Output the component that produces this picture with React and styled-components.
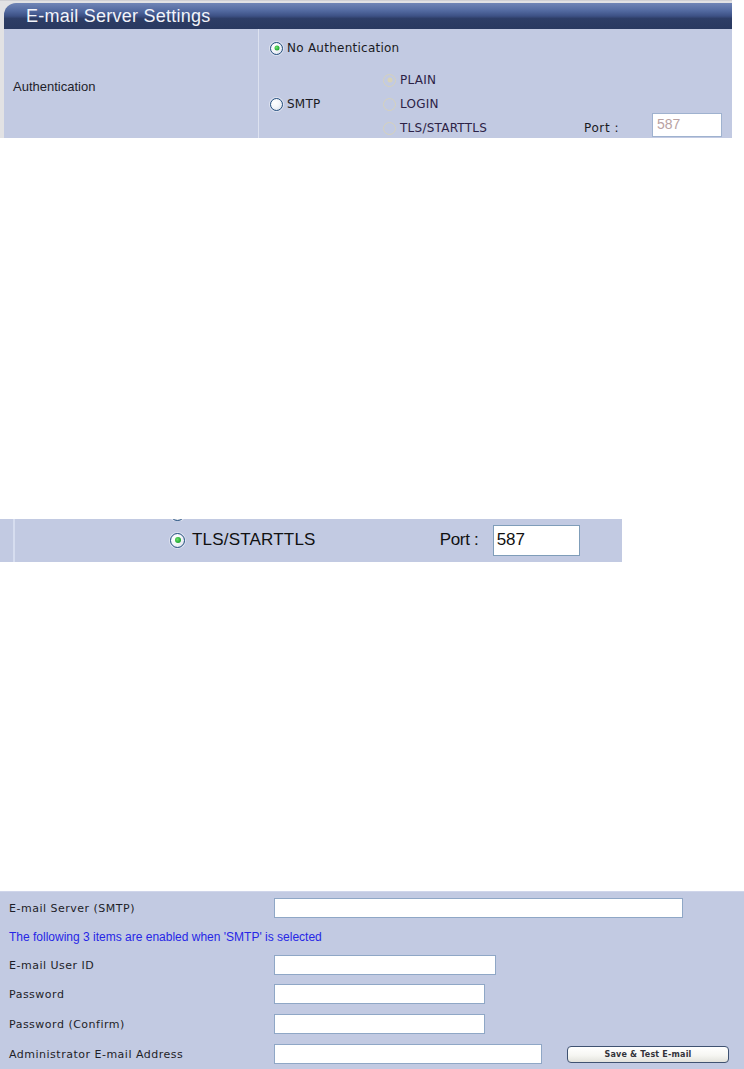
import React from "react";
import styled, { createGlobalStyle } from "styled-components";

const GlobalStyle = createGlobalStyle`
  html, body {
    margin: 0;
    padding: 0;
    background: #ffffff;
  }
  * {
    box-sizing: border-box;
  }
`;

const PANEL_BG = "#c2cae2";

const Page = styled.div`
  display: flex;
  flex-direction: column;
  width: 744px;
  height: 1069px;
  overflow: hidden;
`;

/* ---------- top panel ---------- */

const Frame = styled.div`
  width: 732px;
  height: 138px;
  padding: 2px 0 0 4px;
  background: #e2e2e4;
  border-top: 1px solid #d0d0d4;
`;

const HeaderBar = styled.div`
  height: 26px;
  display: flex;
  align-items: center;
  padding-left: 22px;
  border-top-left-radius: 12px;
  background: linear-gradient(
    #7085b6 0%,
    #5269a0 30%,
    #3d5185 50%,
    #2d3d66 60%,
    #293960 100%
  );
  color: #f2f4fa;
  font-family: "Liberation Sans", Arial, sans-serif;
  font-size: 18px;
  letter-spacing: 0.25px;
`;

const PanelBody = styled.div`
  height: 109px;
  display: grid;
  grid-template-columns: 254px 1px 1fr;
  background: ${PANEL_BG};
  overflow: hidden;
`;

const LabelCell = styled.div`
  display: flex;
  align-items: center;
  padding: 3px 0 0 9px;
  font-family: "Liberation Sans", Arial, sans-serif;
  font-size: 13px;
  color: #1e1e2a;
`;

const Divider = styled.div`
  background: #dde2f0;
`;

const OptionsCell = styled.div`
  display: flex;
  flex-direction: column;
  padding: 12px 0 0 11px;
`;

const RadioRow = styled.div`
  display: flex;
  align-items: center;
  gap: 4px;
  height: 14px;
`;

const OptionText = styled.span`
  font-family: "DejaVu Sans", Verdana, sans-serif;
  font-size: 12px;
  letter-spacing: 0.25px;
  color: ${({ muted }) => (muted ? "#2c2246" : "#1a1a22")};
  white-space: nowrap;
`;

const Radio = styled.span`
  flex: none;
  position: relative;
  display: inline-block;
  width: ${({ size }) => size || 13}px;
  height: ${({ size }) => size || 13}px;
  border-radius: 50%;
  border: ${({ disabled }) =>
    disabled ? "1px solid #d6d2bc" : "1px solid #24507e"};
  background: ${({ disabled }) =>
    disabled
      ? PANEL_BG
      : "radial-gradient(circle at 35% 35%, #ffffff 0%, #f4f6fa 45%, #d4dae6 100%)"};
  box-shadow: ${({ disabled }) =>
    disabled ? "none" : "0 0 0 1px rgba(255,255,255,0.45)"};

  &::after {
    content: "";
    display: ${({ checked }) => (checked ? "block" : "none")};
    position: absolute;
    left: 50%;
    top: 50%;
    width: ${({ size }) => Math.round((size || 13) * 0.42)}px;
    height: ${({ size }) => Math.round((size || 13) * 0.42)}px;
    transform: translate(-50%, -50%);
    border-radius: 50%;
    background: ${({ disabled }) =>
      disabled
        ? "#d9d3b6"
        : "radial-gradient(circle at 40% 40%, #6be06a 0%, #1ea531 70%, #138a26 100%)"};
  }
`;

const AuthGroup = styled.div`
  display: flex;
  align-items: center;
  margin-top: 13px;
  height: 72px;
`;

const SmtpChoice = styled.div`
  width: 113px;
  display: flex;
  align-items: center;
  gap: 4px;
`;

const SubList = styled.div`
  display: flex;
  flex-direction: column;
`;

const SubRow = styled.div`
  display: flex;
  align-items: center;
  gap: 4px;
  height: 24px;
`;

const SubLabel = styled(OptionText)`
  width: ${({ w }) => (w ? `${w}px` : "auto")};
`;

const PortLabel = styled.span`
  width: 64px;
  font-family: "DejaVu Sans", Verdana, sans-serif;
  font-size: 12px;
  letter-spacing: 0.6px;
  color: #1a1a22;
`;

const PortInput = styled.div`
  width: 70px;
  height: 24px;
  margin-bottom: 7px;
  padding: 2px 0 0 4px;
  background: #ffffff;
  border: 1px solid #9fb2cf;
  font-family: "Liberation Sans", Arial, sans-serif;
  font-size: 14px;
  color: #b9a2a2;
`;

/* ---------- zoomed strip ---------- */

const Strip = styled.div`
  margin-top: 381px;
  width: 622px;
  height: 43px;
  padding-left: 13px;
  background: ${PANEL_BG};
  overflow: hidden;
`;

const StripInner = styled.div`
  height: 100%;
  border-left: 2px solid #d6ddef;
  padding-left: 155px;
  display: flex;
  flex-direction: column;
`;

const CroppedRadio = styled.div`
  height: 2px;
  display: flex;
  align-items: flex-end;
  overflow: hidden;
`;

const BigRow = styled.div`
  height: 38px;
  display: flex;
  align-items: center;
  gap: 7px;
  font-family: "Liberation Sans", Arial, sans-serif;
  font-size: 17px;
  color: #111;
`;

const BigLabel = styled.span`
  letter-spacing: 0.2px;
`;

const BigPort = styled.span`
  margin-left: 117px;
  width: 44px;
  letter-spacing: -0.3px;
`;

const BigInput = styled.div`
  width: 87px;
  height: 31px;
  margin-left: 2px;
  padding: 4px 0 0 3px;
  background: #ffffff;
  border: 1px solid #7f9db9;
  font-size: 17px;
  color: #111;
`;

/* ---------- bottom panel ---------- */

const FormPanel = styled.div`
  margin-top: 329px;
  height: 178px;
  padding-top: 1px;
  background: ${PANEL_BG};
  border-top: 1px solid #cfd5ea;
`;

const FormRow = styled.div`
  height: ${({ h }) => h}px;
  display: grid;
  grid-template-columns: 274px auto auto;
  justify-content: start;
  align-items: center;
`;

const FieldLabel = styled.span`
  padding-left: 9px;
  font-family: "DejaVu Sans", Verdana, sans-serif;
  font-size: 11px;
  letter-spacing: 0.5px;
  color: #1e1e28;
`;

const Note = styled.span`
  padding-left: 9px;
  font-family: "Liberation Sans", Arial, sans-serif;
  font-size: 12px;
  color: #2626e6;
  white-space: nowrap;
`;

const TextField = styled.div`
  width: ${({ w }) => w}px;
  height: 20px;
  background: #ffffff;
  border: 1px solid #8fa7c6;
`;

const SaveButton = styled.button`
  margin-left: 25px;
  width: 162px;
  height: 17px;
  padding: 0;
  border: 1px solid #3f5271;
  border-radius: 4px;
  background: linear-gradient(#ffffff 0%, #f6f6f2 55%, #e2e2dc 100%);
  font-family: "DejaVu Sans", Verdana, sans-serif;
  font-size: 8px;
  font-weight: bold;
  letter-spacing: 0.2px;
  color: #33333a;
  line-height: 15px;
`;

const fields = [
  { label: "E-mail User ID", width: 222, h: 28 },
  { label: "Password", width: 211, h: 30 },
  { label: "Password (Confirm)", width: 211, h: 30 },
];

export default function App() {
  return (
    <>
      <GlobalStyle />
      <Page>
        <Frame>
          <HeaderBar>E-mail Server Settings</HeaderBar>
          <PanelBody>
            <LabelCell>Authentication</LabelCell>
            <Divider />
            <OptionsCell>
              <RadioRow>
                <Radio checked />
                <OptionText>No Authentication</OptionText>
              </RadioRow>
              <AuthGroup>
                <SmtpChoice>
                  <Radio />
                  <OptionText>SMTP</OptionText>
                </SmtpChoice>
                <SubList>
                  <SubRow>
                    <Radio disabled checked />
                    <SubLabel muted>PLAIN</SubLabel>
                  </SubRow>
                  <SubRow>
                    <Radio disabled />
                    <SubLabel muted>LOGIN</SubLabel>
                  </SubRow>
                  <SubRow>
                    <Radio disabled />
                    <SubLabel muted w={180}>
                      TLS/STARTTLS
                    </SubLabel>
                    <PortLabel>Port :</PortLabel>
                    <PortInput>587</PortInput>
                  </SubRow>
                </SubList>
              </AuthGroup>
            </OptionsCell>
          </PanelBody>
        </Frame>

        <Strip>
          <StripInner>
            <CroppedRadio>
              <Radio size={15} />
            </CroppedRadio>
            <BigRow>
              <Radio size={15} checked />
              <BigLabel>TLS/STARTTLS</BigLabel>
              <BigPort>Port :</BigPort>
              <BigInput>587</BigInput>
            </BigRow>
          </StripInner>
        </Strip>

        <FormPanel>
          <FormRow h={30}>
            <FieldLabel>E-mail Server (SMTP)</FieldLabel>
            <TextField w={409} />
          </FormRow>
          <FormRow h={28}>
            <Note>The following 3 items are enabled when 'SMTP' is selected</Note>
          </FormRow>
          {fields.map((f) => (
            <FormRow key={f.label} h={f.h}>
              <FieldLabel>{f.label}</FieldLabel>
              <TextField w={f.width} />
            </FormRow>
          ))}
          <FormRow h={30}>
            <FieldLabel>Administrator E-mail Address</FieldLabel>
            <TextField w={268} />
            <SaveButton>Save &amp; Test E-mail</SaveButton>
          </FormRow>
        </FormPanel>
      </Page>
    </>
  );
}
